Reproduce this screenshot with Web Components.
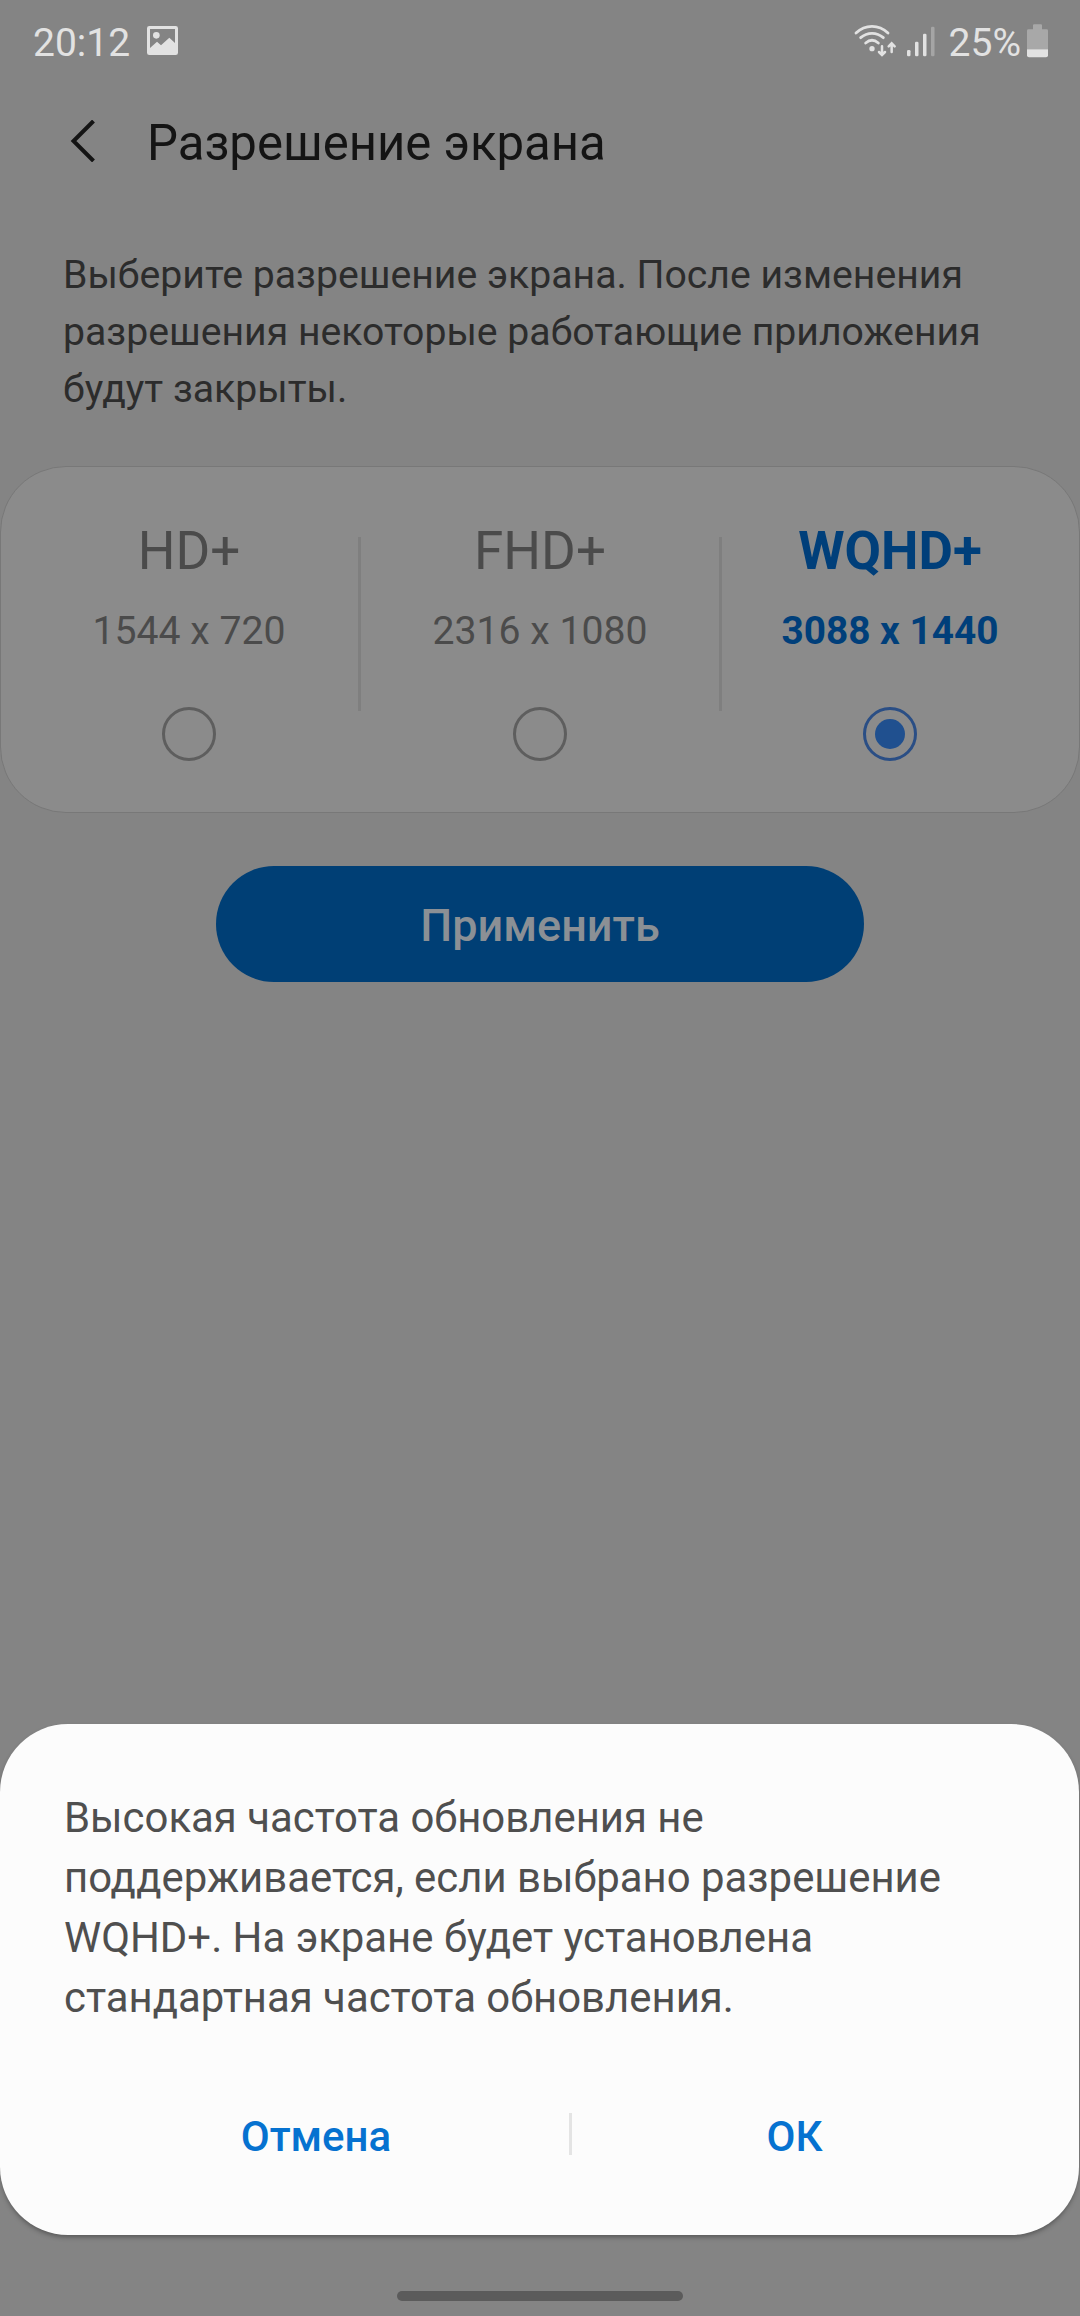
<!DOCTYPE html>
<html lang="ru">
<head>
<meta charset="utf-8">
<title>Разрешение экрана</title>
<style>
  html, body {
    margin: 0;
    padding: 0;
  }

  body {
    width: 1080px;
    height: 2316px;
    overflow: hidden;
    background: #848484;
    font-family: Roboto, "Noto Sans", sans-serif;
  }
</style>
</head>
<body>
<phone-screen>
  <status-bar time="20:12" battery="25%"></status-bar>
  <app-bar>Разрешение экрана</app-bar>
  <page-note>Выберите разрешение экрана. После изменения<br>разрешения некоторые работающие приложения<br>будут закрыты.</page-note>
  <option-card>
    <resolution-option size="1544 x 720">HD+</resolution-option>
    <resolution-option size="2316 x 1080">FHD+</resolution-option>
    <resolution-option size="3088 x 1440" checked>WQHD+</resolution-option>
  </option-card>
  <apply-button>Применить</apply-button>
  <bottom-dialog slot="bottom">
    Высокая частота обновления не<br>поддерживается, если выбрано разрешение<br>WQHD+. На экране будет установлена<br>стандартная частота обновления.
    <span slot="cancel">Отмена</span>
    <span slot="ok">ОК</span>
  </bottom-dialog>
  <nav-handle slot="bottom"></nav-handle>
</phone-screen>

<script>
function define(name, html, setup) {
  const template = document.createElement('template');
  template.innerHTML = html;

  class Element extends HTMLElement {
    constructor() {
      super();

      this._sR = this.attachShadow({ mode: 'open' });
      this._sR.appendChild(template.content.cloneNode(true));
    }

    connectedCallback() {
      if (setup) {
        setup(this, this._sR);
      }
    }
  }

  window.customElements.define(name, Element);
}

define('phone-screen', `
  <style>
    :host {
      display: flex;
      flex-direction: column;
      width: 1080px;
      height: 2316px;
      background: #848484;
    }

    .bottom {
      margin-top: auto;
    }
  </style>

  <slot></slot>
  <div class="bottom"><slot name="bottom"></slot></div>
`);

define('status-bar', `
  <style>
    :host {
      display: flex;
      align-items: center;
      justify-content: space-between;
      box-sizing: border-box;
      height: 85px;
      padding: 0 32px 0 33px;
      color: #e2e2e2;
      font-size: 39px;
      line-height: 46px;
    }

    .side {
      display: flex;
      align-items: center;
    }

    svg {
      display: block;
      fill: currentColor;
    }

    .picture {
      margin: 0 0 4px 16.5px;
    }

    .wifi {
      margin: 0 8px 3px 0;
    }

    .signal {
      margin: 0 13.5px 3px 0;
    }

    .battery {
      margin: 0 0 3px 6px;
    }
  </style>

  <div class="side">
    <span class="time"></span>
    <svg class="picture" width="31" height="29" viewBox="0 0 93 87">
      <path fill-rule="evenodd" d="M7 0H86Q93 0 93 7V80Q93 87 86 87H7Q0 87 0 80V7Q0 0 7 0ZM9 9V66L30 47L42 58L67 35L84 51V9Z"/>
      <circle cx="28" cy="28" r="10"/>
    </svg>
  </div>
  <div class="side">
    <svg class="wifi" width="45" height="36" viewBox="100 68 135 108">
      <g fill="none" stroke="currentColor" stroke-width="8.5" stroke-linecap="round">
        <path d="M109 98Q130 78 157 78Q184 78 205 98"/>
        <path d="M123 112Q138 99 157 99Q176 99 191 112"/>
        <path d="M138 128Q157 112 176 128"/>
        <path d="M187 138V163M178 155L187 164L196 155" stroke-width="7.5"/>
        <path d="M216 155V130M207 138L216 129L225 138" stroke-width="7.5"/>
      </g>
      <circle cx="157" cy="145" r="8"/>
    </svg>
    <svg class="signal" width="29" height="36" viewBox="261 68 87 108">
      <rect x="264" y="149" width="10.5" height="19" rx="4"/>
      <rect x="288" y="124" width="10.5" height="44" rx="4"/>
      <rect x="312" y="100" width="10.5" height="68" rx="4"/>
      <rect x="336" y="79" width="10.5" height="89" rx="4" fill="#a5a5a5"/>
    </svg>
    <span class="level"></span>
    <svg class="battery" width="21" height="36" viewBox="621 68 63 108">
      <path fill="#a8a8a8" d="M639 75Q639 72 642 72H663Q666 72 666 75V87H680Q684 87 684 91V147H621V91Q621 87 625 87H639Z"/>
      <path d="M621 147H684V165Q684 171 678 171H627Q621 171 621 165Z"/>
    </svg>
  </div>
`, (host, root) => {
  root.querySelector('.time').textContent = host.getAttribute('time');
  root.querySelector('.level').textContent = host.getAttribute('battery');
});

define('app-bar', `
  <style>
    :host {
      display: flex;
      align-items: center;
      height: 116px;
      padding-left: 69px;
      color: #141414;
      font-size: 49.1px;
      line-height: 60px;
    }

    svg {
      display: block;
      margin: 0 52px 5px 0;
    }
  </style>

  <svg width="26" height="42" viewBox="0 0 26 42">
    <path d="M24.5 1L4.5 21L24.5 41" fill="none" stroke="currentColor" stroke-width="4"/>
  </svg>
  <span><slot></slot></span>
`);

define('page-note', `
  <style>
    :host {
      display: block;
      padding: 46px 63px 48px;
      color: #2c2c2c;
      font-size: 39.2px;
      line-height: 57px;
      white-space: nowrap;
    }
  </style>

  <slot></slot>
`);

define('option-card', `
  <style>
    :host {
      display: grid;
      grid-template-columns: 338px 358px 336px;
      column-gap: 3px;
      box-sizing: border-box;
      height: 347px;
      padding: 53px 19px 0;
      border: 1px solid #787878;
      border-radius: 66px;
      background: #8b8b8b;
    }
  </style>

  <slot></slot>
`);

define('resolution-option', `
  <style>
    :host {
      display: flex;
      flex-direction: column;
      align-items: center;
      position: relative;
      color: #4b4b4b;
      white-space: nowrap;
    }

    :host([checked]) {
      color: #003f7a;
      font-weight: bold;
    }

    /* separator in the gap to the next option */
    :host(:not(:last-of-type))::after {
      content: "";
      position: absolute;
      top: 17px;
      right: -3px;
      width: 3px;
      height: 174px;
      background: #7f7f7f;
    }

    .name {
      font-size: 53px;
      line-height: 62px;
    }

    .size {
      margin-top: 26px;
      font-size: 39.2px;
      line-height: 46px;
    }

    :host([checked]) .size {
      font-size: 38.8px;
    }

    .radio {
      display: flex;
      align-items: center;
      justify-content: center;
      box-sizing: border-box;
      width: 54px;
      height: 54px;
      margin-top: 53px;
      border: 3px solid #5e5e5e;
      border-radius: 50%;
    }

    :host([checked]) .radio {
      border-color: #2a4e85;
    }

    :host([checked]) .radio::after {
      content: "";
      width: 30px;
      height: 30px;
      border-radius: 50%;
      background: #20508f;
    }
  </style>

  <div class="name"><slot></slot></div>
  <div class="size"></div>
  <div class="radio"></div>
`, (host, root) => {
  root.querySelector('.size').textContent = host.getAttribute('size');
});

define('apply-button', `
  <style>
    :host {
      display: block;
      width: 648px;
      margin: 53px auto 0;
    }

    button {
      display: block;
      box-sizing: border-box;
      width: 100%;
      height: 116px;
      padding: 3px 0 0;
      border: 0;
      border-radius: 58px;
      background: #003f75;
      color: #8b9095;
      font: 500 45px Roboto, "Noto Sans", sans-serif;
    }
  </style>

  <button><slot></slot></button>
`);

define('bottom-dialog', `
  <style>
    :host {
      display: block;
      box-sizing: border-box;
      width: 1079px;
      height: 511px;
      padding: 64px 0 0;
      border-radius: 68px;
      background: #fcfcfc;
      box-shadow: 0 3px 5px -1px rgba(0, 0, 0, 0.35);
    }

    .message {
      padding: 0 64px;
      color: #4f4f4f;
      font-size: 41.9px;
      line-height: 60px;
      white-space: nowrap;
    }

    .actions {
      display: grid;
      grid-template-columns: 506px 3px 445px;
      align-items: center;
      margin-top: 79px;
      padding-left: 63px;
      color: #0672d0;
      font-size: 42px;
      font-weight: 500;
      line-height: 60px;
      text-align: center;
    }

    .line {
      height: 42px;
      margin-bottom: 6px;
      background: #e4e4e4;
    }
  </style>

  <div class="message"><slot></slot></div>
  <div class="actions">
    <slot name="cancel"></slot>
    <div class="line"></div>
    <slot name="ok"></slot>
  </div>
`);

define('nav-handle', `
  <style>
    :host {
      display: flex;
      justify-content: center;
      padding: 56px 0 15px;
    }

    div {
      width: 286px;
      height: 10px;
      border-radius: 5px;
      background: #5b5b5b;
    }
  </style>

  <div></div>
`);
</script>
</body>
</html>
